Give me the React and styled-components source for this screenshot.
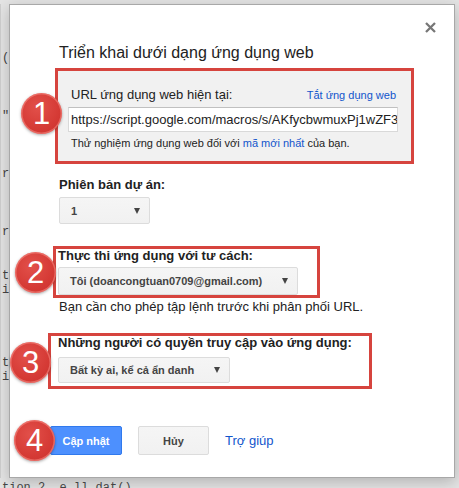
import styled, { createGlobalStyle } from 'styled-components';

const GlobalStyle = createGlobalStyle`
  html, body {
    margin: 0;
    padding: 0;
    background: #e4e4e4;
    font-family: "Liberation Sans", Arial, sans-serif;
  }
  #root {
    width: 459px;
    height: 488px;
    overflow: hidden;
  }
`;

const gutterLines = [
  '(', '', '', '', '"', '', '', '', 'r', '', '', '', 'r', '', '', 't', 'i', '', '', '', '', 't', 'i',
];

function Badge({ n, left, top }) {
  return (
    <Circle style={{ left, top }}>
      <span>{n}</span>
    </Circle>
  );
}

function Select({ width, height, children }) {
  return (
    <SelectBox width={width} height={height}>
      <span>{children}</span>
      <Arrow />
    </SelectBox>
  );
}

function App() {
  return (
    <>
      <GlobalStyle />
      <Page>
        <TopRow>
          <Gutter>{gutterLines.join('\n')}</Gutter>
          <Dialog>
            <CloseRow>
              <CloseIcon viewBox="0 0 11 11">
                <path d="M1 1 L10 10 M10 1 L1 10" />
              </CloseIcon>
            </CloseRow>
            <Title>Triển khai dưới dạng ứng dụng web</Title>

            <UrlPanel>
              <Badge n="1" left={-37} top={22} />
              <PanelHeader>
                <span>URL ứng dụng web hiện tại:</span>
                <Link size={11}>Tắt ứng dụng web</Link>
              </PanelHeader>
              <UrlInput>https://script.google.com/macros/s/AKfycbwmuxPj1wZF3</UrlInput>
              <Hint>
                Thử nghiệm ứng dụng web đối với <Link size={11}>mã mới nhất</Link> của bạn.
              </Hint>
            </UrlPanel>

            <FieldLabel>Phiên bản dự án:</FieldLabel>
            <SelectGap gap={4}>
              <Select width={91} height={27}>1</Select>
            </SelectGap>

            <Marked width={267} shift={6} top={22} pad="0 0 0 2px">
              <Badge n="2" left={-41} top={3} />
              <MarkedLabel>Thực thi ứng dụng với tư cách:</MarkedLabel>
              <SelectGap gap={4}>
                <Select width={240} height={28}>Tôi (doancongtuan0709@gmail.com)</Select>
              </SelectGap>
            </Marked>
            <Note>Bạn cần cho phép tập lệnh trước khi phân phối URL.</Note>

            <Marked width={324} shift={11} top={18} pad="0 0 3px 7px">
              <Badge n="3" left={-41} top={6} />
              <MarkedLabel>Những người có quyền truy cập vào ứng dụng:</MarkedLabel>
              <SelectGap gap={7}>
                <Select width={172} height={26}>Bất kỳ ai, kể cả ẩn danh</Select>
              </SelectGap>
            </Marked>

            <ButtonRow>
              <Badge n="4" left={-36} top={-6} />
              <Button primary>Cập nhật</Button>
              <Button>Hủy</Button>
              <Link size={13}>Trợ giúp</Link>
            </ButtonRow>
          </Dialog>
        </TopRow>
        <CodeLine>tion 2  e ll.dat()</CodeLine>
      </Page>
    </>
  );
}

const Page = styled.div`
  display: flex;
  flex-direction: column;
  height: 488px;
  overflow: hidden;
`;

const TopRow = styled.div`
  display: flex;
  padding-top: 4px;
`;

const Gutter = styled.pre`
  width: 7px;
  margin: 0;
  padding: 47px 0 0 1px;
  border-left: 1px solid #cfcfcf;
  overflow: hidden;
  font-family: "Liberation Mono", monospace;
  font-size: 12px;
  line-height: 14.5px;
  color: #444;
`;

const Dialog = styled.div`
  width: 446px;
  height: 474px;
  box-sizing: border-box;
  padding: 0 0 0 49px;
  background: #fff;
  border: 1px solid #a8a8a8;
  box-shadow: 0 4px 14px rgba(0, 0, 0, 0.22);
  color: #222;
`;

const CloseRow = styled.div`
  display: flex;
  justify-content: flex-end;
  padding: 17px 18px 0 0;
`;

const CloseIcon = styled.svg`
  width: 11px;
  height: 11px;
  stroke: #777;
  stroke-width: 2.3;
  fill: none;
`;

const Title = styled.div`
  margin-top: 10px;
  font-size: 16px;
  line-height: 20px;
  color: #222;
`;

const Circle = styled.div`
  position: absolute;
  width: 41px;
  height: 41px;
  border-radius: 50%;
  background: radial-gradient(circle at 40% 35%, #e2504a 0%, #d53a35 60%, #c9312c 100%);
  box-shadow: inset 0 0 0 1.5px rgba(255, 160, 150, 0.45), 0 1px 3px rgba(0, 0, 0, 0.35);
  display: flex;
  align-items: center;
  justify-content: center;
  z-index: 2;

  span {
    color: #fff;
    font-family: "Liberation Sans", Arial, sans-serif;
    font-size: 31px;
    line-height: 1;
  }
`;

const UrlPanel = styled.div`
  position: relative;
  width: 359px;
  box-sizing: border-box;
  margin: 5px 0 0 -4px;
  padding: 16px 13px 11px 10px;
  background: #f1f1f1;
  border: 3px solid #d6443e;
`;

const PanelHeader = styled.div`
  display: flex;
  justify-content: space-between;
  align-items: baseline;
  padding: 0 2px 0 3px;
  font-size: 13px;
  line-height: 16px;
`;

const Link = styled.span`
  color: #1155cc;
  font-size: ${(p) => p.size}px;
`;

const UrlInput = styled.div`
  margin-top: 4px;
  height: 25px;
  box-sizing: border-box;
  display: flex;
  align-items: center;
  padding: 0 2px;
  background: #fff;
  border: 1px solid #d9d9d9;
  border-top-color: #c0c0c0;
  font-size: 13px;
  white-space: nowrap;
  overflow: hidden;
`;

const Hint = styled.div`
  margin-top: 4px;
  padding-left: 3px;
  font-size: 11px;
  line-height: 14px;
`;

const FieldLabel = styled.div`
  margin-top: 13px;
  font-size: 13px;
  line-height: 16px;
  font-weight: bold;
`;

const SelectGap = styled.div`
  margin-top: ${(p) => p.gap}px;
`;

const SelectBox = styled.div`
  width: ${(p) => p.width}px;
  height: ${(p) => p.height}px;
  box-sizing: border-box;
  display: flex;
  align-items: center;
  justify-content: space-between;
  padding: 0 9px 0 11px;
  background: linear-gradient(#f5f5f5, #f1f1f1);
  border: 1px solid #dcdcdc;
  border-radius: 2px;
  font-size: 11px;
  font-weight: bold;
  color: #444;
  white-space: nowrap;
`;

const Arrow = styled.i`
  width: 0;
  height: 0;
  border-left: 3.5px solid transparent;
  border-right: 3.5px solid transparent;
  border-top: 6px solid #444;
`;

const Marked = styled.div`
  position: relative;
  width: ${(p) => p.width}px;
  box-sizing: border-box;
  margin: ${(p) => p.top}px 0 0 -${(p) => p.shift}px;
  padding: ${(p) => p.pad};
  border: 3px solid #d6443e;
`;

const MarkedLabel = styled.div`
  font-size: 13px;
  line-height: 14px;
  font-weight: bold;
`;

const Note = styled.div`
  margin-top: 1px;
  font-size: 13px;
  line-height: 16px;
`;

const ButtonRow = styled.div`
  position: relative;
  display: flex;
  align-items: center;
  gap: 16px;
  margin: 37px 0 0 -9px;
`;

const Button = styled.div`
  height: 29px;
  width: ${(p) => (p.primary ? 72 : 71)}px;
  box-sizing: border-box;
  display: flex;
  align-items: center;
  justify-content: center;
  border-radius: 2px;
  font-size: 11px;
  font-weight: bold;
  background: ${(p) => (p.primary ? '#4d90fe' : 'linear-gradient(#f5f5f5, #f1f1f1)')};
  border: 1px solid ${(p) => (p.primary ? '#3079ed' : '#dcdcdc')};
  color: ${(p) => (p.primary ? '#fff' : '#444')};
`;

const CodeLine = styled.div`
  margin-top: 3px;
  padding-left: 2px;
  font-family: "Liberation Mono", monospace;
  font-size: 12px;
  line-height: 14px;
  color: #444;
  white-space: pre;
`;

export default App;
